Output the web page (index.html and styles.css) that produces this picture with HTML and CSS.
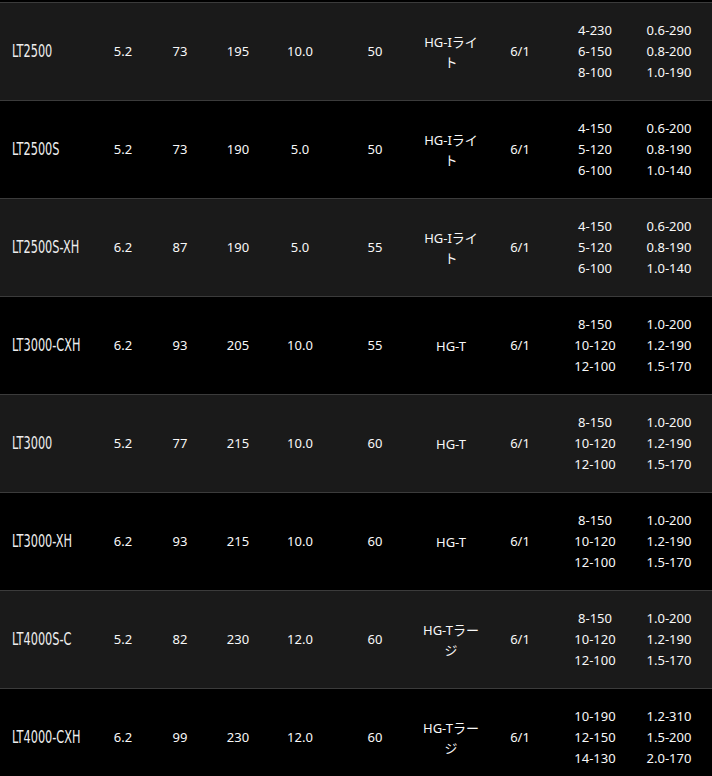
FILE: index.html
```html
<!DOCTYPE html>
<html lang="ja">
<head>
<meta charset="utf-8">
<title>Spec table</title>
<link rel="stylesheet" href="styles.css">
</head>
<body>
<table class="spec">
  <colgroup>
    <col class="c-model"><col class="c-a"><col class="c-b"><col class="c-c"><col class="c-d"><col class="c-e"><col class="c-f"><col class="c-g"><col class="c-h"><col class="c-i">
  </colgroup>
  <tbody>
    <tr class="odd"><td class="model"><span class="name">LT2500</span></td><td>5.2</td><td>73</td><td>195</td><td>10.0</td><td>50</td><td class="hg">HG-Iライト</td><td>6/1</td><td class="multi">4-230<br>6-150<br>8-100</td><td class="multi last">0.6-290<br>0.8-200<br>1.0-190</td></tr>
    <tr class="even"><td class="model"><span class="name">LT2500S</span></td><td>5.2</td><td>73</td><td>190</td><td>5.0</td><td>50</td><td class="hg">HG-Iライト</td><td>6/1</td><td class="multi">4-150<br>5-120<br>6-100</td><td class="multi last">0.6-200<br>0.8-190<br>1.0-140</td></tr>
    <tr class="odd"><td class="model"><span class="name">LT2500S-XH</span></td><td>6.2</td><td>87</td><td>190</td><td>5.0</td><td>55</td><td class="hg">HG-Iライト</td><td>6/1</td><td class="multi">4-150<br>5-120<br>6-100</td><td class="multi last">0.6-200<br>0.8-190<br>1.0-140</td></tr>
    <tr class="even"><td class="model"><span class="name">LT3000-CXH</span></td><td>6.2</td><td>93</td><td>205</td><td>10.0</td><td>55</td><td class="hg">HG-T</td><td>6/1</td><td class="multi">8-150<br>10-120<br>12-100</td><td class="multi last">1.0-200<br>1.2-190<br>1.5-170</td></tr>
    <tr class="odd"><td class="model"><span class="name">LT3000</span></td><td>5.2</td><td>77</td><td>215</td><td>10.0</td><td>60</td><td class="hg">HG-T</td><td>6/1</td><td class="multi">8-150<br>10-120<br>12-100</td><td class="multi last">1.0-200<br>1.2-190<br>1.5-170</td></tr>
    <tr class="even"><td class="model"><span class="name">LT3000-XH</span></td><td>6.2</td><td>93</td><td>215</td><td>10.0</td><td>60</td><td class="hg">HG-T</td><td>6/1</td><td class="multi">8-150<br>10-120<br>12-100</td><td class="multi last">1.0-200<br>1.2-190<br>1.5-170</td></tr>
    <tr class="odd"><td class="model"><span class="name">LT4000S-C</span></td><td>5.2</td><td>82</td><td>230</td><td>12.0</td><td>60</td><td class="hg">HG-Tラージ</td><td>6/1</td><td class="multi">8-150<br>10-120<br>12-100</td><td class="multi last">1.0-200<br>1.2-190<br>1.5-170</td></tr>
    <tr class="even"><td class="model"><span class="name">LT4000-CXH</span></td><td>6.2</td><td>99</td><td>230</td><td>12.0</td><td>60</td><td class="hg">HG-Tラージ</td><td>6/1</td><td class="multi">10-190<br>12-150<br>14-130</td><td class="multi last">1.2-310<br>1.5-200<br>2.0-170</td></tr>
  </tbody>
</table>
</body>
</html>
```

FILE: styles.css
```css
html, body {
  margin: 0;
  padding: 0;
  background: #000;
}
body {
  padding-top: 2px;
  overflow: hidden;
  font-family: "Noto Sans", "Noto Sans CJK JP", sans-serif;
  font-size: 13px;
  color: #f8f8f8;
}
.spec {
  width: 712px;
  table-layout: fixed;
  border-collapse: collapse;
  border-spacing: 0;
}
.c-model { width: 95px; }
.c-a { width: 56px; }
.c-b { width: 58px; }
.c-c { width: 58px; }
.c-d { width: 66px; }
.c-e { width: 84px; }
.c-f { width: 68px; }
.c-g { width: 70px; }
.c-h { width: 80px; }
.c-i { width: 77px; }
.spec tr {
  height: 98px;
  border-top: 1px solid #3b3b3b;
}
.spec tr.odd { background: #1a1a1a; }
.spec tr.even { background: #000; }
.spec td {
  padding: 0;
  text-align: center;
  vertical-align: middle;
  line-height: 21px;
}
.spec td.model {
  text-align: left;
  padding-left: 12px;
  white-space: nowrap;
  font-family: "DejaVu Sans Condensed", "DejaVu Sans", sans-serif;
  font-stretch: condensed;
  font-size: 17px;
  color: #eee;
}
.name {
  display: inline-block;
  transform: scaleX(0.74);
  transform-origin: left center;
}
.spec td.hg {
  padding: 0 6px;
  line-height: 20px;
}
.spec td.last {
  padding-right: 9px;
}
```
